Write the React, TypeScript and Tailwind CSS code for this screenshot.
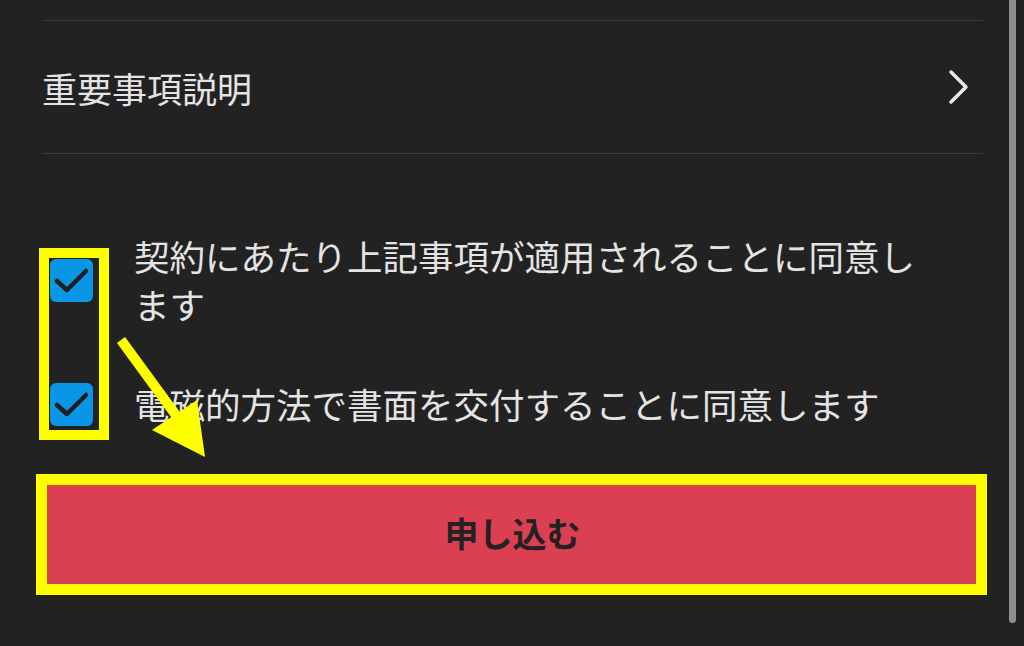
import { useState } from "react";

const font = { fontFamily: '"Noto Sans CJK JP", "Noto Sans", sans-serif' };

function Checkbox({ checked, onToggle }: { checked: boolean; onToggle: () => void }) {
  return (
    <button
      type="button"
      onClick={onToggle}
      className={`flex h-[43px] w-[43px] shrink-0 items-center justify-center rounded-[6px] ${
        checked ? "bg-[#0a96e6]" : "border-2 border-[#8a8a8a] bg-transparent"
      }`}
    >
      {checked && (
        <svg width="43" height="43" viewBox="0 0 43 43" fill="none">
          <path d="M7 22l10 9 19-19" stroke="#1e1e1e" strokeWidth="4.5" strokeLinecap="round" strokeLinejoin="round" />
        </svg>
      )}
    </button>
  );
}

export default function App() {
  const [agreeTerms, setAgreeTerms] = useState(true);
  const [agreeDigital, setAgreeDigital] = useState(true);

  return (
    <div className="relative h-[646px] w-[1024px] overflow-hidden bg-[#222222]" style={font}>
      <div className="ml-[42px] w-[941px] pt-[20px]">
        <div className="h-px bg-[#3a3a3a]" />
        <div className="flex h-[132px] items-center justify-between">
          <span className="text-[35px] leading-none text-[#e4e4e4]">重要事項説明</span>
          <svg width="22" height="36" viewBox="0 0 22 36" fill="none" className="mr-[14px]">
            <path d="M4 3l15 15L4 33" stroke="#e8e8e8" strokeWidth="3.5" strokeLinecap="round" strokeLinejoin="round" />
          </svg>
        </div>
        <div className="h-px bg-[#3a3a3a]" />

        <div className="mt-[78px] flex flex-col gap-[52px]">
          <div className="flex items-center gap-[41px] pl-[8px]">
            <Checkbox checked={agreeTerms} onToggle={() => setAgreeTerms(!agreeTerms)} />
            <p className="w-[800px] text-[35.5px] leading-[48px] text-[#e4e4e4]">
              契約にあたり上記事項が適用されることに同意します
            </p>
          </div>
          <div className="flex items-center gap-[41px] pl-[8px]">
            <Checkbox checked={agreeDigital} onToggle={() => setAgreeDigital(!agreeDigital)} />
            <p className="text-[35.5px] leading-[48px] text-[#e4e4e4]">電磁的方法で書面を交付することに同意します</p>
          </div>
        </div>

        <button
          type="button"
          className="mt-[51px] flex h-[106px] w-full items-center justify-center bg-[#db3f52] text-[34px] font-bold text-[#222222]"
        >
          申し込む
        </button>
      </div>

      {/* annotation overlays */}
      <div className="pointer-events-none absolute left-[39px] top-[248px] h-[192px] w-[70px] border-[10px] border-[#ffff00]" />
      <div className="pointer-events-none absolute left-[36px] top-[474px] h-[121px] w-[951px] border-[11px] border-[#ffff00]" />
      <svg className="pointer-events-none absolute left-0 top-0" width="1024" height="646" viewBox="0 0 1024 646">
        <line x1="121" y1="340" x2="178" y2="418" stroke="#ffff00" strokeWidth="10" />
        <polygon points="152,430 197,400 205,457" fill="#ffff00" />
      </svg>

      {/* scrollbar */}
      <div className="absolute right-[8px] top-0 h-[623px] w-[7px] rounded-b-full bg-[#8e8e8e]" />
    </div>
  );
}
